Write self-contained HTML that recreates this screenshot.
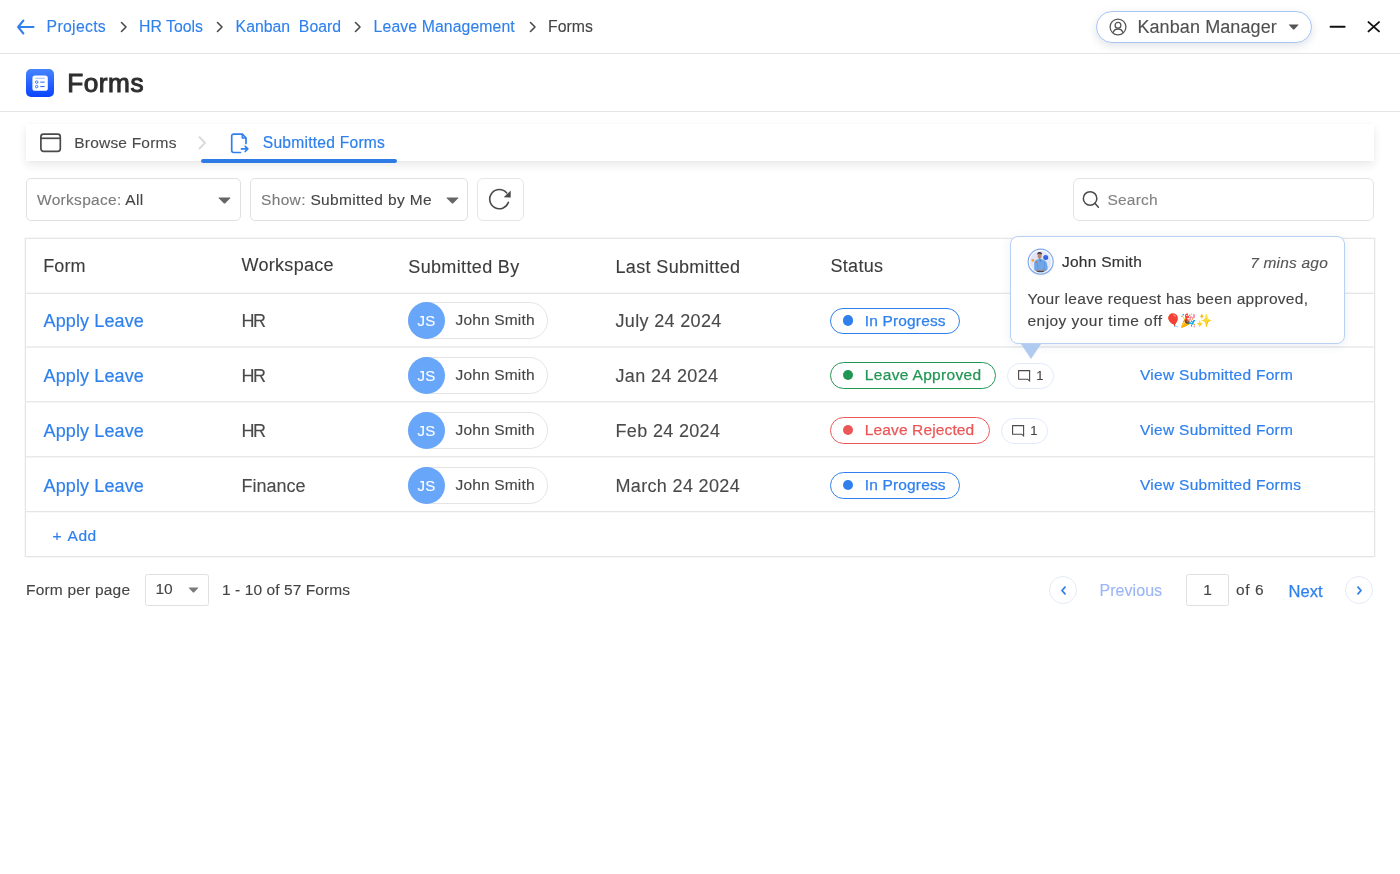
<!DOCTYPE html>
<html lang="en">
<head>
<meta charset="utf-8">
<title>Forms</title>
<style>
*{box-sizing:border-box;margin:0;padding:0}
html,body{width:1400px;height:874px;background:#fff;overflow:hidden}
#app{position:absolute;left:0;top:0;width:1400px;height:874px;will-change:transform;-webkit-text-stroke-width:.12px}
body{font-family:"Liberation Sans",sans-serif;color:#444;position:relative}
a{color:#2f80ed;text-decoration:none}
.abs{position:absolute}
/* top bar */
.topbar{position:absolute;left:0;top:0;width:1400px;height:54px;border-bottom:1px solid #e4e4e4}
.crumbs{position:absolute;left:0;top:0;height:53px;font-size:15.8px;white-space:nowrap;letter-spacing:0}
.crumbs span,.crumbs a{position:absolute;top:16.7px;line-height:20px;margin-left:-.4px}
.crumbs svg{position:absolute}
.userpill{position:absolute;left:1096px;top:10.5px;width:216px;height:32.5px;border:1px solid #a9c6f3;border-radius:17px;background:#fff;box-shadow:0 3px 8px rgba(60,80,120,.16)}
.userpill .nm{position:absolute;left:40.4px;top:5px;font-size:18px;line-height:21px;color:#505050;white-space:nowrap;letter-spacing:.1px}
/* title */
.titlebar{position:absolute;left:0;top:54px;width:1400px;height:58px;border-bottom:1px solid #e4e4e4}
.titlebar h1{position:absolute;left:67.3px;top:13.2px;font-size:26.2px;line-height:32px;font-weight:normal;color:#2e2e2e;letter-spacing:.5px;-webkit-text-stroke:1px #2e2e2e}
.ficon{position:absolute;left:26px;top:15px;width:28px;height:28px;border-radius:5px;background:linear-gradient(180deg,#4585ff 0%,#0a44ff 100%)}
/* tabs */
.tabs{position:absolute;left:26px;top:124px;width:1348px;height:37px;background:#fff;box-shadow:0 4px 9px rgba(0,0,0,.085),0 0 4px rgba(0,0,0,.035)}
.tabs .t{position:absolute;top:9px;font-size:15.5px;line-height:20px;white-space:nowrap}
.tabs .ul{position:absolute;left:175px;top:35.2px;width:196px;height:3.6px;background:#2f7be6;border-radius:2px}
/* filters */
.sel{position:absolute;top:178px;height:43px;border:1px solid #e0e0e0;border-radius:5px;background:#fff;font-size:15.5px;line-height:20px;white-space:nowrap}
.sel .lb{position:absolute;left:10px;top:11px;color:#7a7a7a;letter-spacing:.3px}
.sel .lb b{font-weight:normal;color:#444}
.caret{position:absolute;width:0;height:0;border-left:6px solid transparent;border-right:6px solid transparent;border-top:6.5px solid #6a6a6a}
/* table */
.tbl{position:absolute;left:25px;top:238px;width:1350px;height:319px;border:1px solid #e5e5e5;box-shadow:0 0 0 1px rgba(0,0,0,.028)}
.row{position:absolute;left:0;width:1348px}
.ln{position:absolute;left:0;width:1348px;height:2px}
.row>*{position:absolute;white-space:nowrap}
.th{font-size:18px;line-height:22px;color:#3c3c3c}
.c1{left:17.5px;font-size:18px;line-height:22px;color:#2f80ed;letter-spacing:.12px;-webkit-text-stroke-width:.2px}
.c2{left:215.5px;font-size:18px;line-height:22px;color:#4a4a4a}
.c4{left:589.5px;font-size:18px;line-height:22px;color:#4a4a4a;letter-spacing:.34px}
.user{left:382px;width:139.6px;height:36.8px;border:1px solid #e4e4e4;border-radius:18.3px;background:#fff}
.user i{position:absolute;left:-1px;top:-1px;width:37px;height:36.8px;border-radius:18.5px;background:#68a6fa;color:#fff;font-style:normal;font-size:15px;line-height:37.8px;text-align:center;letter-spacing:.2px}
.user em{position:absolute;left:46.5px;top:7px;font-style:normal;font-size:15.5px;line-height:20px;color:#444;letter-spacing:.17px}
.badge{left:804.3px;height:26.5px;border:1.4px solid;border-radius:14px;font-size:15.5px;line-height:23.7px;padding:0 0 0 33.5px;background:#fff;letter-spacing:.25px;-webkit-text-stroke:.25px currentColor}
.badge:before{content:"";position:absolute;left:11.6px;top:6.6px;width:10.6px;height:10.6px;border-radius:5.3px;background:currentColor}
.blue{color:#2f80ed;border-color:#2f80ed}
.green{color:#219653;border-color:#219653}
.red{color:#eb5757;border-color:#eb5757}
.cm{height:26px;width:46.6px;border:1.2px solid #e1eafa;border-radius:13px;background:#fff;font-size:13px;line-height:23px;color:#444}
.cm span{position:absolute;left:28.2px;top:.4px}
.cm svg{position:absolute;left:10.2px;top:6.4px}
.view{left:1114px;margin-top:.7px;font-size:15.5px;line-height:20px;color:#2f80ed;letter-spacing:.28px;-webkit-text-stroke:.2px #2f80ed}
/* popover */
.pop{position:absolute;left:1010px;top:236px;width:335px;height:108px;border:1px solid #b9d0f5;border-radius:8px;background:#fff;box-shadow:0 2px 10px rgba(60,90,150,.10)}
.pop .nm{position:absolute;left:51px;top:15px;font-size:15.5px;line-height:20px;color:#333;letter-spacing:.25px;-webkit-text-stroke:.2px #333}
.pop .tm{position:absolute;right:16px;top:15.5px;font-size:15.5px;line-height:20px;font-style:italic;color:#555;letter-spacing:.2px}
.pop .msg{position:absolute;left:16.5px;top:51px;font-size:15.5px;line-height:22px;color:#444;white-space:nowrap;letter-spacing:.29px}
.pop .msg .e{font-size:13px;letter-spacing:-.6px;margin-left:-2.2px;vertical-align:1px}
.arrow{position:absolute;left:1020.8px;top:344px;width:0;height:0;border-left:10.7px solid transparent;border-right:10.7px solid transparent;border-top:15.3px solid #b1caf0}
/* pagination */
.pg{position:absolute;font-size:15.5px;line-height:20px;white-space:nowrap;color:#444}
.circ{position:absolute;width:28px;height:28px;border:1px solid #e4e9f4;border-radius:14px;background:#fff}
</style>

</head>
<body><div id="app">

<div class="topbar">
  <div class="crumbs">
    <svg style="left:16px;top:18.8px" width="19" height="16" viewBox="0 0 19 16" fill="none" stroke="#2f80ed" stroke-width="2" stroke-linecap="round" stroke-linejoin="round"><path d="M17.5 8H2.1M7.4 1.5L2.1 8L7.4 14.5"/></svg>
    <a style="left:47px;letter-spacing:.3px">Projects</a>
    <svg style="left:119.5px;top:21px" width="8" height="12" viewBox="0 0 8 12" fill="none" stroke="#4a4a4a" stroke-width="1.6" stroke-linecap="round" stroke-linejoin="round"><path d="M1.5 1.5L6 6L1.5 10.5"/></svg>
    <a style="left:139.5px">HR Tools</a>
    <svg style="left:215.5px;top:21px" width="8" height="12" viewBox="0 0 8 12" fill="none" stroke="#4a4a4a" stroke-width="1.6" stroke-linecap="round" stroke-linejoin="round"><path d="M1.5 1.5L6 6L1.5 10.5"/></svg>
    <a style="left:236px">Kanban&nbsp; Board</a>
    <svg style="left:354px;top:21px" width="8" height="12" viewBox="0 0 8 12" fill="none" stroke="#4a4a4a" stroke-width="1.6" stroke-linecap="round" stroke-linejoin="round"><path d="M1.5 1.5L6 6L1.5 10.5"/></svg>
    <a style="left:374px;letter-spacing:.1px">Leave Management</a>
    <svg style="left:528.5px;top:21px" width="8" height="12" viewBox="0 0 8 12" fill="none" stroke="#4a4a4a" stroke-width="1.6" stroke-linecap="round" stroke-linejoin="round"><path d="M1.5 1.5L6 6L1.5 10.5"/></svg>
    <span style="left:548.5px;color:#444">Forms</span>
  </div>
  <div class="userpill">
    <svg style="position:absolute;left:12px;top:6.5px" width="18" height="18" viewBox="0 0 18 18" fill="none" stroke="#555" stroke-width="1.3"><circle cx="9" cy="9" r="7.9"/><circle cx="9" cy="7.3" r="2.9"/><path d="M3.9 14.9c.9-2.7 2.9-3.9 5.1-3.9s4.2 1.2 5.1 3.9"/></svg>
    <span class="nm">Kanban Manager</span>
    <svg style="position:absolute;left:190.9px;top:12.8px" width="11.4" height="6" viewBox="0 0 11 6"><path d="M1 .4H10Q10.8 .5 10.2 1.1L6 5.4Q5.5 5.8 5 5.4L.8 1.1Q.2 .5 1 .4Z" fill="#555"/></svg>
  </div>
  <svg class="abs" style="left:1329px;top:25px" width="17" height="4" viewBox="0 0 17 4"><path d="M1.6 1.8H15.6" stroke="#111" stroke-width="2.1" stroke-linecap="round"/></svg>
  <svg class="abs" style="left:1366px;top:20px" width="15" height="14" viewBox="0 0 15 14"><path d="M2.5 2.1L13 11.4M13 2.1L2.5 11.4" stroke="#111" stroke-width="1.9" stroke-linecap="round"/></svg>
</div>

<div class="titlebar">
  <div class="ficon">
    <svg style="position:absolute;left:0;top:0" width="28" height="28" viewBox="0 0 28 28"><rect x="6.4" y="6.4" width="15.4" height="15.4" rx="2.6" fill="#fff"/><path d="M9.4 9.3H18.7" stroke="#9db9ff" stroke-width="1"/><circle cx="10.7" cy="13.1" r="1.25" fill="none" stroke="#2a63ff" stroke-width=".9"/><circle cx="10.7" cy="17.6" r="1.25" fill="none" stroke="#2a63ff" stroke-width=".9"/><path d="M14.2 13.1H18.7M14.2 17.6H18.7" stroke="#2a63ff" stroke-width="1"/></svg>
  </div>
  <h1>Forms</h1>
</div>

<div class="tabs">
  <svg style="position:absolute;left:14px;top:9px" width="22" height="20" viewBox="0 0 22 20" fill="none" stroke="#4a4a4a" stroke-width="1.7"><rect x=".9" y="1.1" width="19.4" height="17.2" rx="2.6"/><path d="M.9 5.3H20.3"/></svg>
  <span class="t" style="left:48.3px;color:#4a4a4a;letter-spacing:.2px">Browse Forms</span>
  <svg style="position:absolute;left:171px;top:11px" width="10" height="16" viewBox="0 0 10 16" fill="none" stroke="#d9d9d9" stroke-width="1.9" stroke-linecap="butt" stroke-linejoin="miter"><path d="M2 1.6L8 7.8L2 14"/></svg>
  <svg style="position:absolute;left:204px;top:8px" width="20" height="22" viewBox="0 0 20 22" fill="none" stroke="#2f80ed" stroke-width="1.7" stroke-linecap="round" stroke-linejoin="round"><path d="M16 11.5V6L12.4 2.1H3.6a1.9 1.9 0 0 0-1.9 1.9v14.6a1.9 1.9 0 0 0 1.9 1.9H10.5"/><path d="M12.2 2.4V6H15.8" stroke-width="1.4"/><path d="M11.5 16.9H17.6M15.2 14.3L17.8 16.9L15.2 19.5"/></svg>
  <span class="t" style="left:236.8px;top:9.4px;color:#2f80ed;font-size:15.6px;letter-spacing:.24px;-webkit-text-stroke:.2px #2f80ed">Submitted Forms</span>
  <div class="ul"></div>
</div>

<div class="sel" style="left:26px;width:215px"><span class="lb">Workspace: <b>All</b></span><svg style="position:absolute;left:191px;top:17.5px" width="13" height="7" viewBox="0 0 13 7"><path d="M1 .4H12Q12.9 .5 12.2 1.2L7 6.4Q6.5 6.8 6 6.4L.8 1.2Q.1 .5 1 .4Z" fill="#666"/></svg></div>
<div class="sel" style="left:250px;width:218px"><span class="lb" style="letter-spacing:.34px">Show: <b>Submitted by Me</b></span><svg style="position:absolute;left:194.5px;top:17.5px" width="13" height="7" viewBox="0 0 13 7"><path d="M1 .4H12Q12.9 .5 12.2 1.2L7 6.4Q6.5 6.8 6 6.4L.8 1.2Q.1 .5 1 .4Z" fill="#666"/></svg></div>
<div class="sel" style="left:477px;width:47px;border-color:#e6e6e6;border-radius:6px">
  <svg style="position:absolute;left:-1px;top:-1px" width="47" height="42" viewBox="0 0 47 42"><path d="M31.4 24.3A9.6 9.6 0 1 1 29.7 15" fill="none" stroke="#4a4a4a" stroke-width="1.6" stroke-linecap="round"/><path d="M33.7 12.6V19.5L26.7 19.2Z" fill="#4a4a4a"/></svg>
</div>
<div class="sel" style="left:1073px;width:301px;border-radius:6px;border-color:#e3e3e3">
  <svg style="position:absolute;left:8px;top:11px" width="19" height="19" viewBox="0 0 19 19" fill="none" stroke="#4a4a4a" stroke-width="1.5" stroke-linecap="round"><circle cx="8.1" cy="8.4" r="6.75"/><path d="M12.9 13.2L16.4 17.2"/></svg>
  <span class="lb" style="left:33.5px;color:#828282;letter-spacing:.2px">Search</span>
</div>

<div class="tbl">
  <i class="ln" style="top:53px;background:linear-gradient(#f7f7f7 50%,#e6e6e6 50%)"></i>
  <i class="ln" style="top:107px;background:linear-gradient(#efefef 50%,#eeeeee 50%)"></i>
  <i class="ln" style="top:162px;background:linear-gradient(#e9e9e9 50%,#f4f4f4 50%)"></i>
  <i class="ln" style="top:217px;background:linear-gradient(#e9e9e9 50%,#f4f4f4 50%)"></i>
  <i class="ln" style="top:272px;background:linear-gradient(#e6e6e6 50%,#f8f8f8 50%)"></i>
  <div class="row" style="top:0;height:55px">
    <span class="th" style="left:17.3px;top:16px;letter-spacing:.05px">Form</span>
    <span class="th" style="left:215.5px;top:15px;letter-spacing:.3px">Workspace</span>
    <span class="th" style="left:382.3px;top:17px;letter-spacing:.35px">Submitted By</span>
    <span class="th" style="left:589.5px;top:17px;letter-spacing:.35px">Last Submitted</span>
    <span class="th" style="left:804.5px;top:16px;letter-spacing:.3px">Status</span>
  </div>
  <div class="row" style="top:55px;height:54px">
    <a class="c1" style="top:16.0px">Apply Leave</a><span class="c2" style="top:16.0px;letter-spacing:-1.5px">HR</span>
    <div class="user" style="top:8px"><i>JS</i><em>John Smith</em></div>
    <span class="c4" style="top:16.0px">July 24 2024</span>
    <span class="badge blue" style="top:13.5px;width:129.3px;letter-spacing:0.15px">In Progress</span>
  </div>
  <div class="row" style="top:109px;height:55px">
    <a class="c1" style="top:16.5px">Apply Leave</a><span class="c2" style="top:16.5px;letter-spacing:-1.5px">HR</span>
    <div class="user" style="top:8.8px"><i>JS</i><em>John Smith</em></div>
    <span class="c4" style="top:16.5px">Jan 24 2024</span>
    <span class="badge green" style="top:14.3px;width:165.6px;letter-spacing:0.33px">Leave Approved</span>
    <div class="cm" style="left:981px;top:14.5px"><svg width="13" height="12" viewBox="0 0 13 12" fill="none" stroke="#4a4a4a" stroke-width="1.1" stroke-linejoin="miter"><path d="M.6 .6H11.6V10.9L9.6 9.2H.6Z"/></svg><span>1</span></div>
    <a class="view" style="top:16.5px">View Submitted Form</a>
  </div>
  <div class="row" style="top:164px;height:54px">
    <a class="c1" style="top:16.5px">Apply Leave</a><span class="c2" style="top:16.5px;letter-spacing:-1.5px">HR</span>
    <div class="user" style="top:8.8px"><i>JS</i><em>John Smith</em></div>
    <span class="c4" style="top:16.5px">Feb 24 2024</span>
    <span class="badge red" style="top:14.3px;width:159.5px;letter-spacing:0.13px">Leave Rejected</span>
    <div class="cm" style="left:975px;top:14.5px"><svg width="13" height="12" viewBox="0 0 13 12" fill="none" stroke="#4a4a4a" stroke-width="1.1" stroke-linejoin="miter"><path d="M.6 .6H11.6V10.9L9.6 9.2H.6Z"/></svg><span>1</span></div>
    <a class="view" style="top:16.5px">View Submitted Form</a>
  </div>
  <div class="row" style="top:218px;height:55px">
    <a class="c1" style="top:17.5px">Apply Leave</a><span class="c2" style="top:17.5px;letter-spacing:0px">Finance</span>
    <div class="user" style="top:9.8px"><i>JS</i><em>John Smith</em></div>
    <span class="c4" style="top:17.5px">March 24 2024</span>
    <span class="badge blue" style="top:15.3px;width:129.3px;letter-spacing:0.15px">In Progress</span>
    <a class="view" style="top:17.5px">View Submitted Forms</a>
  </div>
  <div class="row" style="top:273px;height:44px">
    <a style="left:26.6px;top:14.2px;font-size:15.5px;line-height:20px;letter-spacing:.5px;word-spacing:1.5px;-webkit-text-stroke:.2px #2f80ed">+ Add</a>
  </div>
</div>

<div class="pop">
  <svg style="position:absolute;left:15.6px;top:11px" width="28" height="29" viewBox="0 0 28 29">
    <defs>
      <linearGradient id="avbg" x1="0" y1="0" x2="1" y2="1"><stop offset="0" stop-color="#e6dcf7"/><stop offset=".55" stop-color="#dfeaf8"/><stop offset="1" stop-color="#eadff3"/></linearGradient>
      <clipPath id="avc"><circle cx="13.65" cy="13.65" r="10.7"/></clipPath>
      <radialGradient id="avsh" cx=".5" cy=".5" r=".5"><stop offset=".75" stop-color="#5b6f99" stop-opacity=".16"/><stop offset="1" stop-color="#5b6f99" stop-opacity="0"/></radialGradient>
    </defs>
    <ellipse cx="13.8" cy="15.6" rx="14" ry="13.2" fill="url(#avsh)"/>
    <circle cx="13.65" cy="13.65" r="12.5" fill="#fff" stroke="#7da9ec" stroke-width="1.15"/>
    <circle cx="13.65" cy="13.65" r="10.7" fill="url(#avbg)"/>
    <g clip-path="url(#avc)">
      <path d="M7.2 25V15.2Q7.4 12.2 10.2 11.6L12.4 10.9L15 11.2Q18.6 12 19.6 14.6L20.8 19.5L19.3 25Z" fill="#6fa6e8"/>
      <path d="M12.2 11.4L13.2 14.5L14.6 11.6Z" fill="#4f86cf"/>
      <path d="M10.3 14.5L11.2 23.5M17.8 14.2L17 22.5" stroke="#5c93d8" stroke-width=".7" fill="none"/>
      <ellipse cx="12.6" cy="8.2" rx="2" ry="2.7" fill="#b78a74"/>
      <path d="M10.9 9.2Q12.6 12.4 14.4 9.2Q13.8 10.4 12.6 10.4Q11.4 10.4 10.9 9.2Z" fill="#4a3a36"/>
      <path d="M10.2 6.8Q10 4 12.6 3.9Q15.3 3.9 15 6.9Q14 5.7 12.6 5.8Q11.2 5.7 10.2 6.8Z" fill="#3a2f2e"/>
      <circle cx="18.7" cy="9.4" r="2.5" fill="#2d66e3"/>
      <circle cx="18.9" cy="8.6" r=".7" fill="#8a5adf"/>
      <path d="M4.6 10.6L5.7 11.4L6.9 10.7L7.4 12L6.6 13.4L5.6 13.9L4.7 13Z" fill="#f0a437"/>
      <circle cx="9.2" cy="14.3" r=".8" fill="#e0683e"/>
      <path d="M8.6 22.4Q11 21 13.5 22.2Q16 21 17.6 21.8L17.2 23.6H9Z" fill="#a9806e"/>
      <path d="M10 23.2H16.6V24.6H10Z" fill="#2b2f3a"/>
    </g>
  </svg>
  <span class="nm">John Smith</span>
  <span class="tm">7 mins ago</span>
  <div class="msg">Your leave request has been approved,<br><span style="letter-spacing:.45px">enjoy your time off </span><span class="e">🎈🎉✨</span></div>
</div>
<div class="arrow"></div>

<span class="pg" style="left:26px;top:580px;letter-spacing:.2px">Form per page</span>
<div class="sel" style="left:145px;top:574px;width:64px;height:31.5px;border-radius:2.5px"><span class="lb" style="left:9.5px;top:4px;color:#444;letter-spacing:0">10</span><svg style="position:absolute;left:42px;top:12px" width="11" height="6" viewBox="0 0 11 6"><path d="M1 .4H10Q10.8 .5 10.2 1.1L6 5.4Q5.5 5.8 5 5.4L.8 1.1Q.2 .5 1 .4Z" fill="#7a7a7a"/></svg></div>
<span class="pg" style="left:222px;top:580px;letter-spacing:.08px">1 - 10 of 57 Forms</span>

<div class="circ" style="left:1049px;top:576px"><svg style="position:absolute;left:9.5px;top:8.5px" width="7" height="9" viewBox="0 0 7 9" fill="none" stroke="#2f80ed" stroke-width="1.8" stroke-linecap="round" stroke-linejoin="round"><path d="M5 1.2L2 4.5L5 7.8"/></svg></div>
<span class="pg" style="left:1099.5px;top:581px;font-size:16px;color:#9bb6f5;letter-spacing:.05px">Previous</span>
<div class="sel" style="left:1186px;top:574px;width:43px;height:31.5px;border-radius:2.5px"><span class="lb" style="left:0;width:41px;text-align:center;top:4.5px;color:#444;letter-spacing:0">1</span></div>
<span class="pg" style="left:1236px;top:580px;letter-spacing:.6px">of 6</span>
<span class="pg" style="left:1288.6px;top:581px;font-size:16.5px;color:#2f80ed;-webkit-text-stroke:.25px #2f80ed">Next</span>
<div class="circ" style="left:1345px;top:576px"><svg style="position:absolute;left:9.5px;top:8.5px" width="7" height="9" viewBox="0 0 7 9" fill="none" stroke="#2f80ed" stroke-width="1.8" stroke-linecap="round" stroke-linejoin="round"><path d="M2 1.2L5 4.5L2 7.8"/></svg></div>

</div></body>
</html>
